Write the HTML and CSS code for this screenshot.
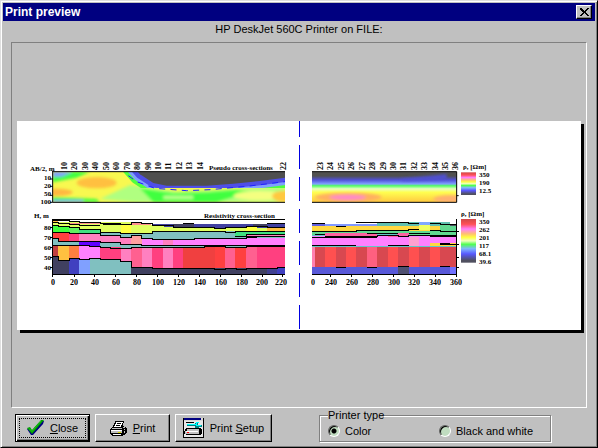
FILE: index.html
```html
<!DOCTYPE html>
<html lang="en">
<head>
<meta charset="utf-8">
<title>Print preview</title>
<link rel="stylesheet" href="styles.css">
</head>
<body>
<div class="window">
  <header class="titlebar">
    <h1 class="title">Print preview</h1>
    <button class="close-box" type="button" aria-label="Close window">
      <svg width="9" height="8" viewBox="0 0 9 8" shape-rendering="crispEdges"><path d="M0 0h2v1h1v1h1v1h1v-1h1v-1h1v-1h2v1h-1v1h-1v1h-1v1h-1v0h1v1h1v1h1v1h1v1h-2v-1h-1v-1h-1v-1h-1v1h-1v1h-1v1h-2v-1h1v-1h1v-1h1v-1h-1v-1h-1v-1h-1z"/></svg>
    </button>
  </header>
  <p class="printer">HP DeskJet 560C Printer on FILE:</p>
  <main class="preview">
    <div class="sheet">
      <svg class="drawing" viewBox="17 121 564 209" role="img" aria-label="Resistivity sections">
        <defs>
          <clipPath id="left-top"><path d="M98 50H795V142H98z"/></clipPath>
          <filter id="soft" x="-20%" y="-50%" width="140%" height="200%"><feGaussianBlur stdDeviation="5"/></filter>
          <filter id="fine"><feGaussianBlur stdDeviation="2"/></filter>
          <linearGradient id="depth" x1="0" y1="0" x2="0" y2="1">
            <stop offset="0" stop-color="#505050"/><stop offset=".14" stop-color="#505050"/>
            <stop offset=".27" stop-color="#5050d8"/><stop offset=".4" stop-color="#80a0ff"/>
            <stop offset=".46" stop-color="#50ff60"/><stop offset=".56" stop-color="#e8ffc0"/>
            <stop offset=".67" stop-color="#ffff50"/><stop offset="1" stop-color="#ffc840"/>
          </linearGradient>
          <linearGradient id="scale" x1="0" y1="0" x2="0" y2="1">
            <stop offset="0" stop-color="#d04848"/><stop offset=".12" stop-color="#ff5058"/>
            <stop offset=".23" stop-color="#ff80ff"/><stop offset=".34" stop-color="#ffc070"/>
            <stop offset=".42" stop-color="#ffff40"/><stop offset=".5" stop-color="#f0ffc0"/>
            <stop offset=".58" stop-color="#50ff50"/><stop offset=".68" stop-color="#80b8ff"/>
            <stop offset=".8" stop-color="#5858ff"/><stop offset=".95" stop-color="#505060"/>
          </linearGradient>
          <clipPath id="right-top"><path d="M36 50H470V142H36z"/></clipPath>
        </defs>

        <!-- first page: three units per pixel -->
        <svg x="20" y="155" width="290" height="135" viewBox="0 0 870 405">
          <g clip-path="url(#left-top)">
            <path fill="#f8f850" d="M98 50H795V142H98z"/>
            <g filter="url(#soft)">
              <path fill="#b0ff80" d="M350 142L240 132L330 90L400 100L470 110L795 95V142z"/>
              <path fill="#40ff40" d="M98 50H210L170 68L98 82zM98 126L230 132L240 142H98zM360 100L460 115L560 112L650 104L700 112L660 120L590 142H400z"/>
              <path fill="#80a0ff" d="M98 50H160L125 65H98zM98 134H190V142H98z"/>
              <ellipse cx="230" cy="83" rx="60" ry="17" fill="#ffc040"/>
              <ellipse cx="110" cy="112" rx="48" ry="11" fill="#ffb840"/>
              <ellipse cx="720" cy="122" rx="80" ry="14" fill="#f4ff80"/>
              <ellipse cx="790" cy="124" rx="34" ry="17" fill="#ffc840"/>
              <path fill="#c0ff90" d="M430 122h90v10h-90z"/>
            </g>
            <g filter="url(#fine)" stroke-linejoin="round">
              <path stroke="#50ff40" stroke-width="66" d="M335 30L360 58L400 84L440 92L560 92L640 86L720 78L810 66V30z"/>
              <path stroke="#80a0ff" stroke-width="44" d="M335 30L360 58L400 84L440 92L560 92L640 86L720 78L810 66V30z"/>
              <path stroke="#5050e8" stroke-width="26" d="M335 30L360 58L400 84L440 92L560 92L640 86L720 78L810 66V30z"/>
              <path fill="#505050" d="M335 30L360 58L400 84L440 92L560 92L640 86L720 78L810 66V30z"/>
            </g>
            <path fill="none" stroke="#2020ff" stroke-width="3" stroke-dasharray="18 16" d="M325 62L350 80L405 100L500 107L570 104L680 94L795 80"/>
          </g>
          <path class="axis" d="M98 48V142H795M98 50H795M90 72h8M90 94h8M90 121h8M90 142h8"/>

          <g shape-rendering="crispEdges">
            <path fill="#4040a0" d="M420 207H795V220H420z"/>
            <path fill="#404060" d="M459 207H522V217H459zM700 207h40v9h-40z"/>
            <path fill="#e0ff60" d="M98 201H333L427 214L459 217H582V220H615V218H741V229H795V236H98z"/>
            <path fill="#4040a0" d="M396 207h31v5h-31z"/>
            <path fill="#ffff40" d="M302 206h31v30h-31zM678 215h33v14h-33z"/>
            <path fill="#ffc040" d="M98 193h16v8h-16zM741 217h54v13h-54z"/>
            <path fill="#ff9090" d="M147 203H302V208H147zM333 205h60v6h-60z"/>
            <path fill="#40ff40" d="M98 212H147V232H98z"/>
            <path fill="#60f060" d="M147 215h31v20h-31z"/>
            <path fill="#40e080" d="M178 222h62v13h-62z"/>
            <path fill="#80c0c0" d="M98 250H795V278H98zM240 233H396V250H240zM396 229H795V250H396z"/>
            <path fill="#40e080" d="M645 230H795V244H645z"/>
            <path fill="#ff80c0" d="M178 235h62v26h-62zM240 241h62v21h-62zM302 245h31v22h-31zM678 239h117v5H678z"/>
            <path fill="#ff4040" d="M98 232h16v18H98zM114 232h33v26h-33z"/>
            <path fill="#ff4080" d="M147 235h31v23h-31z"/>
            <path fill="#ffa0a0" d="M333 241h32v26h-32z"/>
            <path fill="#ff80ff" d="M365 249h31v22h-31zM396 253H522V271H396zM522 249H795V271H522z"/>
            <path fill="#ff80c0" d="M428 252h31v18h-31z"/>
            <path fill="#6000ff" d="M178 260h62v13h-62z"/>
            <path fill="#c04040" d="M98 271h16v34H98z"/>
            <path fill="#ffc040" d="M114 271h33v44h-33z"/>
            <path fill="#ff8040" d="M147 271h31v39h-31z"/>
            <path fill="#ff80ff" d="M178 272h62v40h-62z"/>
            <path fill="#ff4080" d="M240 277h62v40h-62zM396 277h32v62h-32zM459 277h31v62h-31zM710 277h85v62h-85z"/>
            <path fill="#ff80c0" d="M302 280h31v39h-31zM365 277h31v62h-31zM428 277h31v62h-31z"/>
            <path fill="#ff6090" d="M333 277h32v62h-32zM615 277h31v65h-31zM678 277h32v65h-32z"/>
            <path fill="#f04040" d="M490 277h94v64h-94z"/>
            <path fill="#ff4040" d="M584 277h31v65h-31zM646 277h32v65h-32z"/>
            <path fill="#404060" d="M98 304h16v12h33v42H98zM333 339H795V358H333z"/>
            <path fill="#4040c0" d="M147 310h31v48h-31zM771 337h24v21h-24z"/>
            <path fill="#404090" d="M741 342h30v16h-30z"/>
            <path fill="#80a0ff" d="M178 313h31v45h-31z"/>
            <path fill="#80c0c0" d="M209 310h31v2h62v6h31v40H209z"/>
            <path class="layer" d="M98 196h49v4h31v3h62v3h62v2h31v-5h32v3h31v4h31M98 202h16v3h33v4h31v3h62"/>
            <path class="layer" d="M98 212h16v3h33v3h31v5h62v10h62v3h31v-2h32v2h31v-7H615v3h31v-3H795M98 232h49v3h31v1h62v5h62v5h31v-5h32v8h31v4h126v-4H678v-10H795M98 250h16v8h64v2h62v3h62v5h63v3H795"/>
            <path class="layer" d="M98 271H209v3h31v3h31v3h62v-3H552v-2H615v2h63v-2H795M98 304h16v12h33v-6h31v3h31v-3h31v2h62v7h31v18h63v3H584v2h31v-2h33v2h30v-2h93v-3h24M396 212h63v5H582v3h33v-2h63v-3h63v2h54M489 205h33M741 206h54"/>
            <path class="axis" d="M98 192V358H795M98 194H795M250 207h80M645 244h150M678 247h33M552 275h63M678 273h117"/>
            <path class="axis" d="M90 217h8M90 247h8M90 278h8M90 308h8M90 338h8M98 358v9M162 358v9M224 358v9M286 358v9M350 358v9M412 358v9M475 358v9M538 358v9M600 358v9M663 358v9M726 358v9M788 358v9"/>
          </g>
        </svg>

        <!-- second page -->
        <svg x="300" y="155" width="200" height="135" viewBox="0 0 600 405">
          <g clip-path="url(#right-top)">
            <path fill="url(#depth)" d="M36 50H470V142H36z"/>
            <g filter="url(#soft)">
              <ellipse cx="145" cy="127" rx="100" ry="14" fill="#ffb060"/>
              <ellipse cx="143" cy="127" rx="55" ry="8" fill="#ff88c8"/>
              <ellipse cx="450" cy="132" rx="50" ry="11" fill="#ffb070"/>
              <path fill="#5050d8" d="M300 73L440 57V72L310 78z"/>
            </g>
          </g>
          <path class="axis" d="M36 50H470V142H36M470 122h6"/>
          <g shape-rendering="crispEdges">
            <path fill="#6060e0" d="M36 207H75V213H36z"/>
            <path fill="#8098ff" d="M75 206H232V214H75z"/>
            <path fill="#60c0b0" d="M232 202H450V218H232z"/>
            <path fill="#80a8ff" d="M357 201h32v9h-32z"/>
            <path fill="#ffd840" d="M36 213H420V230H36z"/>
            <path fill="#f0ff60" d="M357 210h32v15h-32z"/>
            <path fill="#60d890" d="M36 229H470V240H36zM420 210h50v32h-50z"/>
            <path fill="#505060" d="M450 206h20v6h-20z"/>
            <path fill="#ff80ff" d="M36 240H470V274H36z"/>
            <path fill="#ff60a0" d="M75 235h190v8H75zM263 235h63v12h-63z"/>
            <path fill="#ffa0d0" d="M326 245h32v28h-32z"/>
            <path fill="#ffd840" d="M390 263h80v10h-80z"/>
            <path fill="#d84850" d="M36 273H470V337H36z"/>
            <path fill="#ff80b0" d="M36 273h10v64H36z"/>
            <path fill="#ff6080" d="M201 273h30v64h-30z"/>
            <path fill="#ff5050" d="M75 273h33v64H75zM138 273h30v64h-30zM264 273h30v64h-30zM326 273h31v64h-31zM390 273h30v64h-30z"/>
            <path fill="#5858d8" d="M36 336H470V358H36z"/>
            <path fill="#505070" d="M294 336h32v22h-32z"/>
            <path fill="#7070ff" d="M450 336h20v22h-20z"/>
            <path class="layer" d="M36 206H75M108 214h30M168 202h158v3h31M390 205h30v3h50M36 229H168v-3h62v1h96v-4h31M389 226h31v4h50M201 234h92M326 234h63M45 238h30M75 243h157v-3h63v4h31v-4h64M36 246H232M390 243h80M36 271H168M200 273h64v-2h62M326 273h64M420 264h30M420 269h50M108 338h30M200 338h31M294 334h32M420 334h30"/>
            <path fill="none" stroke="#60c8c8" stroke-width="3" d="M36 274H470M36 240H75M232 237h60"/>
            <path class="axis" d="M36 272H168M75 243H232M390 241h80M470 192V358H36M470 230h6M470 268h6M470 307h6M470 338h6M92 358v9M154 358v9M217 358v9M280 358v9M343 358v9M406 358v9M468 358v9"/>
          </g>
          <path fill="url(#scale)" d="M483 52H528V120H483z"/>
          <path fill="url(#scale)" d="M483 192H528V323H483z"/>
        </svg>

        <path class="fold" d="M299 113V330"/>

        <g class="chart-title">
          <text x="30" y="171">AB/2, m</text>
          <text x="209" y="170">Pseudo cross-sections</text>
          <text x="34" y="218">H, m</text>
          <text x="204" y="218">Resistivity cross-section</text>
          <text x="463" y="169">ρ, [Ωm]</text>
          <text x="461" y="216">ρ, [Ωm]</text>
        </g>
        <g class="chart-value end">
          <text x="51" y="180">10</text><text x="51" y="188">20</text><text x="51" y="196">50</text><text x="51" y="204">100</text>
          <text x="51" y="230">80</text><text x="51" y="240">70</text><text x="51" y="250">60</text><text x="51" y="260">50</text><text x="51" y="270">40</text>
        </g>
        <g class="chart-tick middle">
          <text x="53" y="285">0</text><text x="74" y="285">20</text><text x="95" y="285">40</text><text x="116" y="285">60</text><text x="137" y="285">80</text><text x="158" y="285">100</text><text x="179" y="285">120</text><text x="200" y="285">140</text><text x="221" y="285">160</text><text x="242" y="285">180</text><text x="262" y="285">200</text><text x="281" y="285">220</text>
          <text x="313" y="285">0</text><text x="331" y="285">240</text><text x="352" y="285">260</text><text x="373" y="285">280</text><text x="394" y="285">300</text><text x="414" y="285">320</text><text x="435" y="285">340</text><text x="456" y="285">360</text>
        </g>
        <g class="chart-value">
          <text x="479" y="177">350</text><text x="479" y="185">190</text><text x="479" y="193">12.5</text>
          <text x="479" y="224">350</text><text x="479" y="232">262</text><text x="479" y="240">201</text><text x="479" y="248">117</text><text x="479" y="256">68.1</text><text x="479" y="264">39.6</text>
        </g>
        <g class="chart-tick" transform="rotate(-90)">
          <text x="-170" y="67">10</text><text x="-170" y="77">20</text><text x="-170" y="88">30</text><text x="-170" y="98">40</text><text x="-170" y="109">50</text><text x="-170" y="119">60</text><text x="-170" y="130">70</text><text x="-170" y="140">80</text><text x="-170" y="151">90</text><text x="-170" y="161">10</text><text x="-170" y="171">11</text><text x="-170" y="182">12</text><text x="-170" y="192">13</text><text x="-170" y="203">14</text><text x="-170" y="286">22</text>
          <text x="-170" y="323">23</text><text x="-170" y="333">24</text><text x="-170" y="344">25</text><text x="-170" y="354">26</text><text x="-170" y="365">27</text><text x="-170" y="375">28</text><text x="-170" y="386">29</text><text x="-170" y="396">30</text><text x="-170" y="406">31</text><text x="-170" y="417">32</text><text x="-170" y="427">33</text><text x="-170" y="438">34</text><text x="-170" y="448">35</text><text x="-170" y="458">36</text>
        </g>
      </svg>
    </div>
  </main>
  <form class="actions">
    <button class="btn btn-default" type="button">
      <svg width="17" height="16" viewBox="0 0 17 16"><path fill="#000080" d="M0 9l2-1 3 3L14 1h3l-1 3L6 15H4z"/><path fill="#00a000" d="M0 8l3-1 2 3 9-10h3L5 14z"/><path stroke="#20c020" fill="none" d="M2 8.500l3 3L14 1"/></svg>
      <span><u>C</u>lose</span>
    </button>
    <button class="btn" type="button">
      <svg width="17" height="15" viewBox="0 0 17 15" shape-rendering="crispEdges"><path d="M5 0h9v2h-1v3h1v1h2v1h1v5h-1v1h-1v1h-2v1H2v-1H1v-1H0V8h1V7h1V6h1V4h1V2h1z"/><path fill="#fff" d="M6 1h7v1h-1v2h-1v2H4V5h1V3h1z"/><path stroke="#000" d="M7 2.500h4M6 4.500h4"/><path fill="#c0c0c0" d="M2 7h10v1H2zM1 9h11v3H1zM13 6h2v1h-2zM14 8h1v1h-1zM14 10h1v2h-1z"/><path fill="#fff" d="M1 9h11v1H1zM3 13h8v1H3z"/><path fill="#e0e000" d="M8 11h3v1H8z"/></svg>
      <span><u>P</u>rint</span>
    </button>
    <button class="btn btn-wide" type="button">
      <svg width="21" height="20" viewBox="0 0 21 20" shape-rendering="crispEdges"><path fill="#d8d8d8" d="M0 0h21v20H0z"/><path fill="#e8e8e8" d="M1 3h19v16H1z"/><path fill="#000080" d="M1 0h17v2H1z"/><path d="M0 0h1v20H0zM0 19h21v1H0zM20 0h1v20h-1zM3 4h8v1H3zM3 10h15v1h1v5h-1v1H3v-1H1v-3h1v-2h1z"/><path fill="#c0c0c0" d="M4 11h12v2H4zM2 13h14v3H2z"/><path fill="#fff" d="M3 13h12v1H3z"/><path fill="#f00" d="M4 14h2v1H4z"/><path fill="#008080" d="M4 7h9v1H4zM12 5h3v2h4v2h-3v1h-4z"/><path fill="#00ffff" d="M4 6h9v1H4zM13 4h3v1h-2v2h4v1h-5z"/></svg>
      <span>Print <u>S</u>etup</span>
    </button>
    <fieldset class="group">
      <legend>Printer type</legend>
      <label class="choice"><input type="radio" name="type" checked> Color</label>
      <label class="choice"><input type="radio" name="type"> Black and white</label>
    </fieldset>
  </form>
</div>
</body>
</html>
```
FILE: styles.css
```css
* {
  box-sizing: border-box;
}

body {
  margin: 0;
  font: 11px/14px "Liberation Sans", Arial, sans-serif;
  color: #000;
}

.window {
  display: flex;
  flex-direction: column;
  min-height: 100vh;
  padding: 2px;
  background: #c0c0c0;
  border: 1px solid;
  border-color: #dfdfdf #000 #000 #dfdfdf;
  box-shadow: inset 1px 1px #fff, inset -1px -1px #808080;
}

.titlebar {
  display: flex;
  align-items: center;
  justify-content: space-between;
  height: 18px;
  padding: 0 3px 0 2px;
  background: #000080;
}

.title {
  margin: 0;
  font-size: 12px;
  color: #fff;
}

.close-box {
  display: flex;
  align-items: center;
  justify-content: center;
  width: 16px;
  height: 14px;
  padding: 0;
  background: #c0c0c0;
  border: 1px solid;
  border-color: #fff #000 #000 #fff;
  box-shadow: inset -1px -1px #808080;
}

.printer {
  margin: 0;
  padding: 1px 0 6px;
  text-align: center;
}

.preview {
  display: flex;
  flex: 1;
  align-items: center;
  margin: 0 8px;
  padding: 0 5px;
  border: 1px solid;
  border-color: #808080 #fff #fff #808080;
}

.sheet {
  flex: 1;
  background: #fff;
  box-shadow: 3px 3px #000;
}

.drawing {
  display: block;
  width: 100%;
}

.axis,
.layer {
  fill: none;
  stroke: #000;
  stroke-width: 3px;
}

.fold {
  fill: none;
  stroke: #0000e0;
  stroke-width: 1px;
  stroke-dasharray: 24 8;
  shape-rendering: crispEdges;
}

.chart-title,
.chart-value {
  font: bold 7px "Liberation Serif", "Times New Roman", serif;
}

.chart-tick {
  font: bold 8px "Liberation Serif", "Times New Roman", serif;
}

.end {
  text-anchor: end;
}

.middle {
  text-anchor: middle;
}

.actions {
  display: flex;
  align-items: flex-end;
  gap: 5px;
  padding: 0 12px 3px;
}

.btn {
  display: flex;
  align-items: center;
  justify-content: center;
  gap: 6px;
  width: 75px;
  height: 28px;
  padding: 0;
  font: inherit;
  color: #000;
  white-space: nowrap;
  background: #c0c0c0;
  border: 1px solid;
  border-color: #fff #000 #000 #fff;
  box-shadow: inset -1px -1px #808080;
}

.btn-default {
  border-color: #000;
  outline: 1px dotted #000;
  outline-offset: -5px;
  box-shadow: inset 1px 1px #fff, inset -1px -1px #000, inset -2px -2px #808080;
}

.btn-wide {
  width: 97px;
}

.group {
  display: flex;
  width: 232px;
  min-width: 0;
  margin: 0 0 0 42px;
  padding: 2px 0 3px 8px;
  border: 1px solid #808080;
  box-shadow: 1px 1px #fff, inset 1px 1px #fff;
}

.group legend {
  padding: 0;
  background: #c0c0c0;
}

.choice {
  display: flex;
  flex: 1;
  align-items: center;
  gap: 5px;
  white-space: nowrap;
}

.choice input {
  width: 12px;
  height: 12px;
  margin: 0;
  appearance: none;
  background: #c0dcc0;
  border: 1px solid;
  border-color: #606060 #fff #fff #606060;
  border-radius: 50%;
  box-shadow: inset 1px 1px #000;
}

.choice input:checked {
  background: radial-gradient(circle, #000 2px, #c0dcc0 3px);
}
```
